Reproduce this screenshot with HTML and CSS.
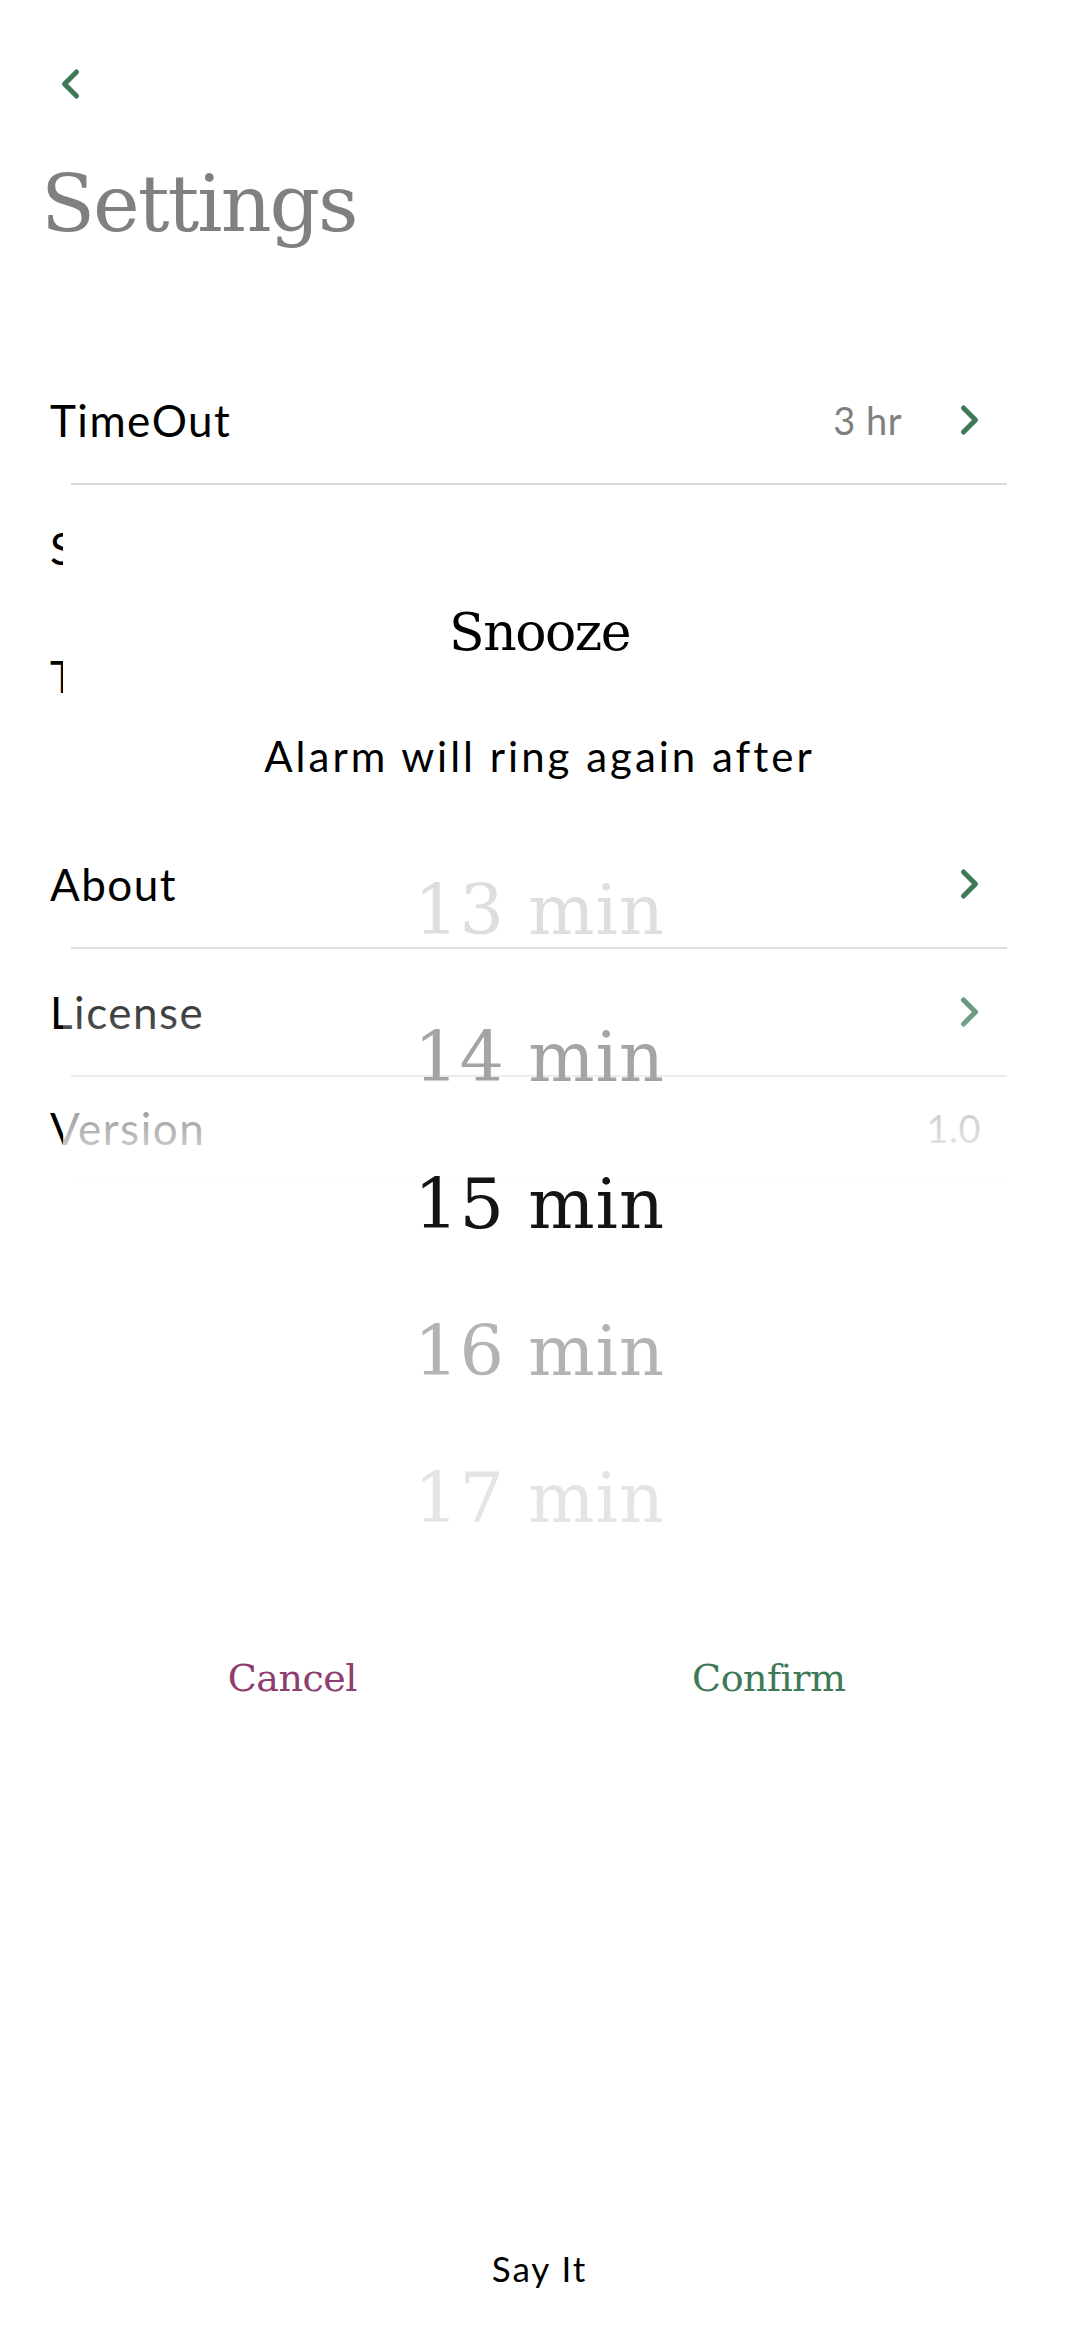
FILE: index.html
```html
<!DOCTYPE html>
<html lang="en">
<head>
<meta charset="utf-8">
<title>Settings</title>
<link rel="stylesheet" href="styles.css">
</head>
<body>
<div class="page">
  <header class="top">
    <button class="back" aria-label="Back">
      <svg width="24" height="32" viewBox="0 0 24 32"><path d="M17.5 4 L5.5 16 L17.5 28" fill="none" stroke="#3e7a57" stroke-width="5" stroke-linecap="round" stroke-linejoin="round"/></svg>
    </button>
    <h1 class="title">Settings</h1>
  </header>

  <section class="list">
    <div class="item">
      <div class="item-main">
        <span class="label">TimeOut</span>
        <span class="value">3 hr</span>
        <svg class="chev" width="24" height="32" viewBox="0 0 24 32"><path d="M6.5 4 L18.5 16 L6.5 28" fill="none" stroke="#3e7a57" stroke-width="5" stroke-linecap="round" stroke-linejoin="round"/></svg>
      </div>
      <div class="divider"></div>
    </div>
    <div class="item">
      <div class="item-main">
        <span class="label">Snooze</span>
        <span class="value">15 min</span>
        <svg class="chev" width="24" height="32" viewBox="0 0 24 32"><path d="M6.5 4 L18.5 16 L6.5 28" fill="none" stroke="#3e7a57" stroke-width="5" stroke-linecap="round" stroke-linejoin="round"/></svg>
      </div>
      <div class="divider"></div>
    </div>
    <div class="item">
      <div class="item-main">
        <span class="label">Tone</span>
        <span class="value">Default</span>
        <svg class="chev" width="24" height="32" viewBox="0 0 24 32"><path d="M6.5 4 L18.5 16 L6.5 28" fill="none" stroke="#3e7a57" stroke-width="5" stroke-linecap="round" stroke-linejoin="round"/></svg>
      </div>
      <div class="divider"></div>
    </div>

    <div class="group-gap"></div>

    <div class="item">
      <div class="item-main">
        <span class="label">About</span>
        <svg class="chev" width="24" height="32" viewBox="0 0 24 32"><path d="M6.5 4 L18.5 16 L6.5 28" fill="none" stroke="#3e7a57" stroke-width="5" stroke-linecap="round" stroke-linejoin="round"/></svg>
      </div>
      <div class="divider"></div>
    </div>
    <div class="item">
      <div class="item-main">
        <span class="label">License</span>
        <svg class="chev" width="24" height="32" viewBox="0 0 24 32"><path d="M6.5 4 L18.5 16 L6.5 28" fill="none" stroke="#3e7a57" stroke-width="5" stroke-linecap="round" stroke-linejoin="round"/></svg>
      </div>
      <div class="divider"></div>
    </div>
    <div class="item item--compact">
      <div class="item-main">
        <span class="label">Version</span>
        <span class="value value--end">1.0</span>
      </div>
      <div class="divider"></div>
    </div>
  </section>

  <footer class="footer">Say It</footer>

  <div class="dialog" role="dialog" aria-label="Snooze">
    <div class="dialog-head">
      <h2 class="dialog-title">Snooze</h2>
      <p class="dialog-sub">Alarm will ring again after</p>
    </div>
    <div class="picker">
      <div class="pick pick--far">13 min</div>
      <div class="pick pick--near">14 min</div>
      <div class="pick pick--sel">15 min</div>
      <div class="pick pick--near2">16 min</div>
      <div class="pick pick--far2">17 min</div>
      <div class="actions">
        <button class="act act--cancel">Cancel</button>
        <button class="act act--confirm">Confirm</button>
      </div>
    </div>
  </div>
</div>
</body>
</html>
```

FILE: styles.css
```css
* { box-sizing: border-box; }

html, body {
  margin: 0;
  padding: 0;
  background: #fff;
}

body {
  font-family: "Lato", "Liberation Sans", sans-serif;
  color: #000;
}

.page {
  position: relative;
  width: 1079px;
  min-height: 2338px;
  display: flex;
  flex-direction: column;
}

/* Header */
.top {
  padding: 68px 0 0 41px;
}

.back {
  display: block;
  width: 24px;
  height: 32px;
  margin-left: 18px;
  padding: 0;
  border: 0;
  background: none;
}

.back svg { display: block; }

.title {
  margin: 61px 0 0;
  font-family: "DejaVu Serif", "Liberation Serif", serif;
  font-weight: normal;
  font-size: 79px;
  line-height: 86px;
  letter-spacing: -2px;
  color: #808080;
}

/* List */
.list {
  margin-top: 110px;
}

.item {
  padding: 0 72px 0 50px;
}

.item-main {
  display: flex;
  align-items: center;
  padding: 33px 26px 33px 0;
}

.item--compact .item-main {
  padding: 21px 26px 24px 0;
}

.label {
  flex: 1;
  font-size: 44px;
  line-height: 60px;
  letter-spacing: 1.5px;
  color: #000;
}

.value {
  font-size: 38px;
  line-height: 60px;
  letter-spacing: 0.5px;
  color: #808080;
  margin-right: 55px;
}

.value--end { margin-right: 0; }

.chev { display: block; flex: none; }

.divider {
  height: 2px;
  margin-left: 21px;
  background: #dadada;
}

.group-gap {
  height: 80px;
}

/* Footer */
.footer {
  margin-top: auto;
  padding-bottom: 50px;
  text-align: center;
  font-size: 35px;
  line-height: 40px;
  letter-spacing: 2px;
  color: #000;
}

/* Dialog overlay */
.dialog {
  position: absolute;
  top: 500px;
  left: 63px;
  right: 63px;
  display: flex;
  flex-direction: column;
}

.dialog-head {
  background: #fff;
  padding: 100px 0 49px;
  text-align: center;
}

.dialog-title {
  margin: 0;
  font-family: "DejaVu Serif", "Liberation Serif", serif;
  font-weight: normal;
  font-size: 52px;
  line-height: 64px;
  letter-spacing: -1.5px;
  color: #000;
}

.dialog-sub {
  margin: 67px 0 0;
  font-size: 42px;
  line-height: 50px;
  letter-spacing: 3px;
  color: #000;
}

.picker {
  padding-top: 7px;
  text-align: center;
  background: linear-gradient(to bottom,
    rgba(255,255,255,0) 0px,
    rgba(255,255,255,0) 60px,
    rgba(255,255,255,0.25) 183px,
    rgba(255,255,255,0.7) 300px,
    rgba(255,255,255,1) 360px,
    rgba(255,255,255,1) 100%);
}

.pick {
  font-family: "DejaVu Serif", "Liberation Serif", serif;
  font-size: 70px;
  line-height: 147px;
  letter-spacing: 1px;
  white-space: nowrap;
}

.pick--far { color: #dedede; }
.pick--near { color: #a4a4a4; }
.pick--sel { color: #141414; }
.pick--near2 { color: #b3b3b3; }
.pick--far2 { color: #e4e4e4; }

.actions {
  display: flex;
  margin-top: 76px;
  padding-bottom: 120px;
}

.act {
  flex: 1;
  padding: 0;
  border: 0;
  background: none;
  font-family: "DejaVu Serif", "Liberation Serif", serif;
  font-size: 38px;
  line-height: 60px;
  letter-spacing: -0.5px;
}

.act--cancel { color: #8e3d6e; padding-right: 18px; }
.act--confirm { color: #3e7a57; padding-right: 18px; }
```
